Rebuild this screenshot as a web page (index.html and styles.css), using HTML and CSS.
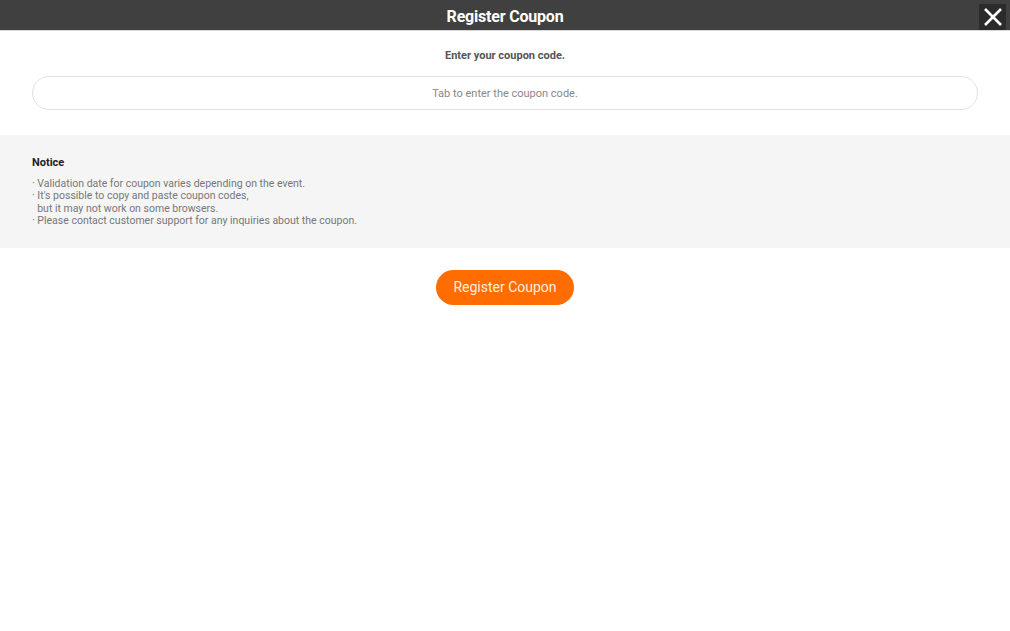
FILE: index.html
```html
<!DOCTYPE html>
<html lang="en">
<head>
    <meta charset="UTF-8">
    <meta name="viewport" content="width=device-width, initial-scale=1.0">
    <title>Register Coupon</title>
    <link rel="stylesheet" href="styles.css">
</head>
<body>
    <div class="header">
        <h1>Register Coupon</h1>
        <button class="close-btn" aria-label="Close">
            <svg width="20" height="20" viewBox="0 0 20 20">
                <path d="M2 2 L18 18 M18 2 L2 18" stroke="#fff" stroke-width="2.6" fill="none"/>
            </svg>
        </button>
    </div>

    <div class="code-box">
        <p class="code-title">Enter your coupon code.</p>
        <input type="text" class="code-input" placeholder="Tab to enter the coupon code.">
    </div>

    <div class="notice">
        <h3>Notice</h3>
        <ul>
            <li>· Validation date for coupon varies depending on the event.</li>
            <li>· It's possible to copy and paste coupon codes,<br>&nbsp;&nbsp;but it may not work on some browsers.</li>
            <li>· Please contact customer support for any inquiries about the coupon.</li>
        </ul>
    </div>

    <div class="actions">
        <button class="register-btn">Register Coupon</button>
    </div>
</body>
</html>
```

FILE: styles.css
```css
body {
    margin: 0;
    padding: 0;
    font-family: Roboto, 'Noto Sans', sans-serif;
    background: #fff;
    color: #555;
}

.header {
    position: relative;
    height: 30px;
    background-color: #404040;
    border-bottom: 1px solid #d8d8d8;
    display: flex;
    align-items: center;
    justify-content: center;
}

.header h1 {
    margin: 2px 0 0 0;
    font-size: 16px;
    font-weight: bold;
    color: #fff;
    letter-spacing: -0.2px;
}

.close-btn {
    position: absolute;
    right: 4px;
    top: 4px;
    width: 27px;
    height: 26px;
    padding: 0;
    border: none;
    background-color: #2b2b2b;
    display: flex;
    align-items: center;
    justify-content: center;
    cursor: pointer;
}

.code-box {
    padding: 18px 32px 25px 32px;
    text-align: center;
}

.code-title {
    margin: 0 0 14px 0;
    font-size: 11px;
    font-weight: bold;
    color: #555;
}

.code-input {
    box-sizing: border-box;
    width: 100%;
    height: 34px;
    border: 1px solid #e2e2e2;
    border-radius: 17px;
    text-align: center;
    font-family: Roboto, 'Noto Sans', sans-serif;
    font-size: 11px;
    outline: none;
}

.code-input::placeholder {
    color: #888;
}

.notice {
    background-color: #f5f5f5;
    padding: 21px 32px 20px 32px;
}

.notice h3 {
    margin: 0 0 9px 0;
    font-size: 11px;
    font-weight: bold;
    color: #222;
}

.notice ul {
    margin: 0;
    padding: 0;
    list-style: none;
}

.notice li {
    font-size: 10.5px;
    line-height: 12.4px;
    color: #777;
}

.actions {
    padding-top: 22px;
    display: flex;
    justify-content: center;
}

.register-btn {
    width: 138px;
    height: 35px;
    border: none;
    border-radius: 18px;
    background-color: #ff6c00;
    color: #ffeede;
    font-family: Roboto, 'Noto Sans', sans-serif;
    font-size: 14px;
    cursor: pointer;
}
```
